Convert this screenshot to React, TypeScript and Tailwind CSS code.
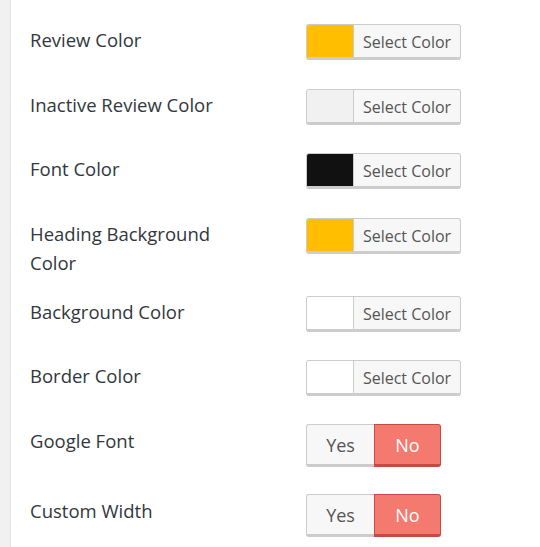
import clsx from "clsx";

type Row =
  | { kind: "color"; label: string; swatch: string; height: number }
  | { kind: "toggle"; label: string; height: number };

const rows: Row[] = [
  { kind: "color", label: "Review Color", swatch: "bg-[#ffbe00]", height: 65 },
  { kind: "color", label: "Inactive Review Color", swatch: "bg-[#f1f1f1]", height: 64 },
  { kind: "color", label: "Font Color", swatch: "bg-[#111111]", height: 65 },
  { kind: "color", label: "Heading Background Color", swatch: "bg-[#ffbe00]", height: 78 },
  { kind: "color", label: "Background Color", swatch: "bg-white", height: 64 },
  { kind: "color", label: "Border Color", swatch: "bg-white", height: 64 },
  { kind: "toggle", label: "Google Font", height: 70 },
  { kind: "toggle", label: "Custom Width", height: 70 },
];

const heights: Record<number, string> = {
  64: "h-[64px]",
  65: "h-[65px]",
  70: "h-[70px]",
  78: "h-[78px]",
};

export default function App() {
  return (
    <div className="flex h-[547px] w-[540px] overflow-hidden bg-white font-['Segoe_UI','Open_Sans',sans-serif]">
      <div className="w-[11px] shrink-0 border-r border-[#e2e2e2] bg-[#f1f1f1]" />
      <div className="flex-1 pl-[19px] pt-[24px]">
        {rows.map((row) => (
          <div key={row.label} className={clsx("flex items-start", heights[row.height])}>
            <div
              className={clsx(
                "w-[276px] shrink-0 pr-[56px] text-[18.5px] leading-[29px] text-[#32373c]",
                row.kind === "toggle" ? "pt-[1.5px]" : "pt-[0.5px]",
              )}
            >
              {row.label}
            </div>
            {row.kind === "color" ? <ColorButton swatch={row.swatch} /> : <Toggle />}
          </div>
        ))}
      </div>
    </div>
  );
}

function ColorButton({ swatch }: { swatch: string }) {
  return (
    <button
      type="button"
      className="flex h-[36px] w-[155px] overflow-hidden rounded-[3px] border border-[#cccccc] border-b-[3px] bg-[#f7f7f7]"
    >
      <span className={clsx("h-full w-[47px] shrink-0 border-r border-[#cccccc]", swatch)} />
      <span className="flex flex-1 items-center justify-center pt-[2px] text-[16px] text-[#555555]">Select Color</span>
    </button>
  );
}

function Toggle() {
  return (
    <div className="flex h-[43px] w-[135px] text-[18px]">
      <span className="flex w-[68px] items-center justify-center rounded-l-[3px] border border-r-0 border-b-[3px] border-[#cccccc] bg-[#f7f7f7] pt-[1px] text-[#555555]">
        Yes
      </span>
      <span className="flex flex-1 items-center justify-center rounded-r-[3px] border border-b-[3px] border-[#c9483f] bg-[#f47a6f] pt-[1px] text-white">
        No
      </span>
    </div>
  );
}
